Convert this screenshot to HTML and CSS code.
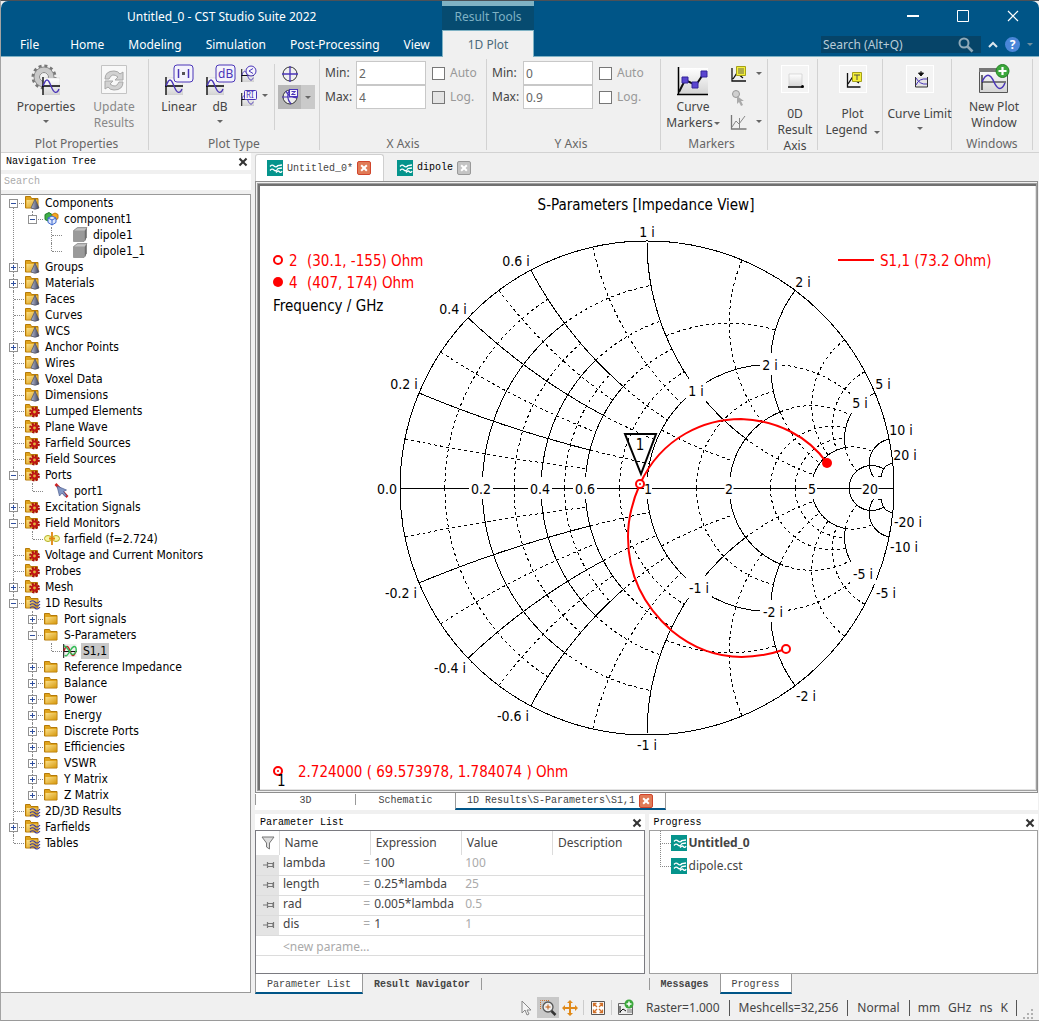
FILE: index.html
```html
<!DOCTYPE html>
<html lang="en">
<head>
  <meta charset="utf-8">
  <meta name="viewport" content="width=device-width">
  <title>Untitled_0 - CST Studio Suite 2022</title>
  <link rel="stylesheet" href="styles.css">
</head>
<body>

<!-- shared icons -->
<svg class="defs" width="0" height="0">
  <defs>
    <linearGradient id="gold" x1="0" y1="0" x2="1" y2="1">
      <stop offset="0" stop-color="#fbe08a"/><stop offset="1" stop-color="#d79a10"/>
    </linearGradient>
    <linearGradient id="paper" x1="0" y1="0" x2="0" y2="1">
      <stop offset="0" stop-color="#fff"/><stop offset="1" stop-color="#d4d4d4"/>
    </linearGradient>
    <linearGradient id="steel" x1="0" y1="0" x2="1" y2="0">
      <stop offset="0" stop-color="#b9bfd6"/><stop offset="1" stop-color="#3c4059"/>
    </linearGradient>
    <symbol id="folder" viewBox="0 0 16 16">
      <path d="M.5 2.500h5l1 2h6.500v8.500h-12.500z" fill="#e0a41c" stroke="#b57a08"/>
      <path d="M1.500 6h11v6.500h-11z" fill="url(#gold)"/>
    </symbol>
    <symbol id="folder-cone" viewBox="0 0 16 16">
      <path d="M.5 1.500h5l1 2h6.500v9.500h-12.500z" fill="#e0a41c" stroke="#b57a08"/>
      <path d="M1.500 5h11v7.500h-11z" fill="url(#gold)"/>
      <path d="M10 4l4 9q-4 2.500-8 0z" fill="url(#steel)" stroke="#4a4d63" stroke-width=".7"/>
    </symbol>
    <symbol id="folder-gear" viewBox="0 0 16 16">
      <path d="M.5 1.500h4l1 2h7v9.500h-12z" fill="#e0a41c" stroke="#b57a08"/>
      <path d="M1.500 5h10.500v7.500h-10.500z" fill="url(#gold)"/>
      <circle cx="9.500" cy="9" r="4.200" fill="none" stroke="#a81010" stroke-width="2.400" stroke-dasharray="2 1.300"/>
      <circle cx="9.500" cy="9" r="2.500" fill="none" stroke="#c01414" stroke-width="2.200"/>
    </symbol>
    <symbol id="folder-wave" viewBox="0 0 16 16">
      <path d="M.5 1.500h4.500l1 2h7v9.500h-12.500z" fill="#e0a41c" stroke="#b57a08"/>
      <path d="M1.500 5h11v7.500h-11z" fill="url(#gold)"/>
      <path d="M5 7q2.500-2.500 5 0t5-1M5 10q2.500-2.500 5 0t5-1M5 13q2.500-2.500 5 0t5-1" fill="none" stroke="#3d3c9c" stroke-width="1.100"/>
    </symbol>
    <symbol id="cubes" viewBox="0 0 16 16">
      <path d="M1 3.500l4-2 3 2v5l-3 2-4-2z" fill="#3fae49" stroke="#1d7a28"/>
      <path d="M8 3.500l3-1.500 3 1.500v4l-3 2-3-2z" fill="#f5a623" stroke="#c47d0e"/>
      <path d="M4 7l4-2 4 2v4.500l-4 2.500-4-2.500z" fill="#dfe8fb" stroke="#3b66d0"/>
      <path d="M4 7l4 2 4-2M8 9v5" fill="none" stroke="#3b66d0"/>
    </symbol>
    <symbol id="solid" viewBox="0 0 16 16">
      <path d="M.5 3.500l4-3h9.500l-1.500 3v9.500l-1.500 1.500h-10.500z" fill="#9a9a9a" stroke="#7b7b7b" stroke-width=".6"/>
      <path d="M1.500 3.300l3-2h9l-2 2.200h-10z" fill="#c4c4c4"/>
      <path d="M11.800 4l2-3v9.500l-2 3z" fill="#6e6e6e"/>
    </symbol>
    <symbol id="port" viewBox="0 0 16 16">
      <path d="M1.500 1l12 13" stroke="#d02020" stroke-width="2.600"/>
      <path d="M3 3l9.500 4-3 1.500 3 4-1.500 1-3-3.500-2.500 3z" fill="#8397c4" stroke="#4d5f90" stroke-width=".7"/>
    </symbol>
    <symbol id="farfield" viewBox="0 0 16 16">
      <ellipse cx="4" cy="7.500" rx="3.500" ry="3" fill="#f7f6a0" stroke="#b3ad22"/>
      <ellipse cx="12" cy="7.500" rx="3.500" ry="3" fill="#f7f6a0" stroke="#b3ad22"/>
      <path d="M8 1v13M5 7.500h6" stroke="#e0850e" stroke-width="1.800"/>
    </symbol>
    <symbol id="curve" viewBox="0 0 16 16">
      <path d="M.5 1h13v13h-13z" fill="#eee"/>
      <path d="M.7 1v14M1 8.500h13" stroke="#111"/>
      <path d="M1 8q3-9 6 0t6 0" fill="none" stroke="#b22" stroke-width="1.400"/>
      <path d="M1 3q2 0 5 5t5 3q3-2 2-6-2-4-6 3t-5 4" fill="none" stroke="#3b5" stroke-width="1.400"/>
    </symbol>
    <symbol id="doc" viewBox="0 0 16 16">
      <path d="M0 0h16v16h-16z" fill="#05948c"/>
      <path d="M3 6.500q2-2.500 4-.5t4-.5l4-.5M3 10.500q2-2.500 4-.5t4-1.500l4-.5M9 12.500q2-2.500 3.500-.8t2.500-.7" fill="none" stroke="#fff" stroke-width="1.300"/>
    </symbol>
    <symbol id="plot" viewBox="0 0 18 18">
      <path d="M1 1h17v17h-17z" fill="url(#paper)" stroke="#c8c8c8" stroke-width=".5"/>
      <path d="M1 0v18M0 9h18" stroke="#000" stroke-width="1.300"/>
      <path d="M1 9c3-8 5-8 8 0s6 8 8 3" fill="none" stroke="#4a35b8" stroke-width="1.300"/>
    </symbol>
    <symbol id="pin" viewBox="0 0 12 8">
      <path d="M0 4h4M4.500 1v6M5 2.500h5v3h-5M10.500 1v6" fill="none" stroke="#777" stroke-width="1.200"/>
    </symbol>
  </defs>
</svg>

<header class="titlebar">
  <div class="title">Untitled_0 - CST Studio Suite 2022</div>
  <nav class="menu">
    <a href="#" class="file">File</a>
    <a href="#">Home</a>
    <a href="#">Modeling</a>
    <a href="#">Simulation</a>
    <a href="#">Post-Processing</a>
    <a href="#">View</a>
  </nav>
  <div class="context">
    <div class="context-title">Result Tools</div>
    <a href="#" class="context-tab">1D Plot</a>
  </div>
  <div class="win-buttons">
    <button aria-label="Minimize"><svg width="12" height="12"><path d="M0 6h12" stroke="#fff" stroke-width="2"/></svg></button>
    <button aria-label="Maximize"><svg width="12" height="12"><path d="M.5.5h11v11h-11z" fill="none" stroke="#fff"/></svg></button>
    <button aria-label="Close"><svg width="12" height="12"><path d="M1 1l10 10M11 1l-10 10" stroke="#fff" stroke-width="1.200"/></svg></button>
  </div>
  <div class="tools">
    <div class="search">
      <input type="text" placeholder="Search (Alt+Q)" aria-label="Search">
      <svg width="16" height="16"><circle cx="6" cy="6" r="4.500" fill="none" stroke="#8fa9b8" stroke-width="2"/><path d="M9.500 9.500l5 5" stroke="#8fa9b8" stroke-width="2.600"/></svg>
    </div>
    <button aria-label="Collapse ribbon"><svg width="10" height="8"><path d="M1 6l4-4 4 4" fill="none" stroke="#dbe7ee" stroke-width="2"/></svg></button>
    <button class="help" aria-label="Help">?</button>
    <i class="caret light"></i>
  </div>
</header>

<section class="ribbon">
  <div class="group g-props">
    <div class="items">
      <button class="big">
        <svg width="32" height="32">
          <circle cx="14" cy="13" r="11" fill="none" stroke="#777" stroke-width="3" stroke-dasharray="3 2.760"/>
          <circle cx="14" cy="13" r="7.500" fill="none" stroke="#c9c9c9" stroke-width="5"/>
          <circle cx="14" cy="13" r="10" fill="none" stroke="#888"/>
          <circle cx="14" cy="13" r="4.500" fill="#f0f0f0" stroke="#888"/>
          <use href="#plot" x="12" y="13" width="18" height="18"/>
        </svg>
        <span>Properties</span><i class="caret"></i>
      </button>
      <button class="big off" disabled>
        <svg width="32" height="32">
          <path d="M3.500 1.500h25v28h-25z" fill="#f8f8f8" stroke="#c4c4c4"/>
          <path d="M7 15q0-8 9-8 4 0 6 3l3-2v8h-8l3-3q-6-5-9 2zM25 18q0 8-9 8-4 0-6-3l-3 2v-8h8l-3 3q6 5 9-2z" fill="#d2d2d2" stroke="#a8a8a8"/>
        </svg>
        <span>Update<br>Results</span>
      </button>
    </div>
    <h2>Plot Properties</h2>
  </div>

  <div class="group g-type">
    <div class="items">
      <button class="big">
        <svg width="32" height="32">
          <use href="#plot" x="2" y="13" width="18" height="18"/>
          <rect x="11" y="1" width="19" height="17" rx="3" fill="#f4f3fb" stroke="#4a35b8"/>
          <path d="M15.500 5v9M25.500 5v9" stroke="#4a35b8" stroke-width="1.500"/><path d="M19 8h3v3h-3z" fill="#555"/>
        </svg>
        <span>Linear</span>
      </button>
      <button class="big narrow">
        <svg width="32" height="32">
          <use href="#plot" x="2" y="13" width="18" height="18"/>
          <rect x="12" y="1" width="19" height="17" rx="3" fill="#f4f3fb" stroke="#4a35b8"/>
          <text x="14" y="14" class="glyph">dB</text>
        </svg>
        <span>dB</span><i class="caret"></i>
      </button>
      <div class="small-col">
        <button aria-label="Phase"><svg width="18" height="18"><use href="#plot" x="1" y="4" width="13" height="13"/><circle cx="11" cy="6" r="5" fill="#f4f3fb" stroke="#4a35b8"/><path d="M13 3.500l-4 2.500 4 2.500" fill="none" stroke="#4a35b8"/></svg></button>
        <button aria-label="Real and imaginary"><svg width="18" height="18"><use href="#plot" x="1" y="4" width="13" height="13"/><rect x="4.500" y="1.500" width="12" height="9" rx="1" fill="#f4f3fb" stroke="#4a35b8"/><text x="6" y="9" class="glyph tiny">RI</text></svg></button>
      </div>
      <i class="caret low"></i>
      <div class="rule"></div>
      <div class="small-col">
        <button aria-label="Polar"><svg width="18" height="18"><circle cx="9" cy="9" r="7" fill="none" stroke="#333"/><path d="M1 9h16M9 1v16" stroke="#4a35b8" stroke-width="1.300"/></svg></button>
        <button class="pressed" aria-label="Smith chart">
          <svg width="18" height="18"><circle cx="9" cy="9" r="7" fill="#eee" stroke="#333"/><path d="M1 9h16M9 1q-5 8 1 15M5 3q2 6 11 7" fill="none" stroke="#4a35b8" stroke-width="1.200"/><rect x="8.500" y="1.500" width="8" height="7" fill="#f4f3fb" stroke="#4a35b8"/><path d="M10.500 3.500h4l-4 3h4" fill="none" stroke="#4a35b8"/></svg>
          <span><i class="caret"></i></span>
        </button>
      </div>
    </div>
    <h2>Plot Type</h2>
  </div>

  <div class="group g-axis">
    <div class="axis">
      <label for="xmin">Min:</label><input id="xmin" type="text" value="2">
      <label class="check"><input type="checkbox">Auto</label>
      <label for="xmax">Max:</label><input id="xmax" type="text" value="4">
      <label class="check"><input type="checkbox" disabled>Log.</label>
    </div>
    <h2>X Axis</h2>
  </div>

  <div class="group g-axis y">
    <div class="axis">
      <label for="ymin">Min:</label><input id="ymin" type="text" value="0">
      <label class="check"><input type="checkbox">Auto</label>
      <label for="ymax">Max:</label><input id="ymax" type="text" value="0.9">
      <label class="check"><input type="checkbox">Log.</label>
    </div>
    <h2>Y Axis</h2>
  </div>

  <div class="group g-markers">
    <div class="items">
      <button class="big">
        <svg width="32" height="32"><path d="M2 4h29v26h-29z" fill="url(#paper)"/><path d="M1.500 3v28M0 30.500h31" stroke="#000" stroke-width="1.500"/><path d="M2 28l6-12 11 5 8-12" fill="none" stroke="#111" stroke-width="2"/><path d="M5 13h6v6h-6zM15 18h6v6h-6zM24 7h6v6h-6z" fill="#5a45d0" stroke="#35269a"/></svg>
        <span>Curve<br>Markers<i class="caret"></i></span>
      </button>
      <div class="small-col three">
        <button aria-label="Marker label"><svg width="18" height="18"><path d="M2 3v13h14M3 14l4-6 6 5" fill="none" stroke="#111" stroke-width="1.300"/><path d="M6.500 1.500h9v9h-9z" fill="#f5f03a" stroke="#a5a01a"/><path d="M8 4h6M8 6h6M8 8h6" stroke="#665"/></svg><i class="caret"></i></button>
        <button aria-label="Pick marker"><svg width="18" height="18"><circle cx="6" cy="5" r="3.500" fill="#d0d0d0" stroke="#999"/><path d="M7 7l7 5-3 0 2 4-2 1-2-4-2 2z" fill="#aaa"/></svg></button>
        <button aria-label="Axis marker"><svg width="18" height="18"><path d="M1.500 2v14h15" fill="none" stroke="#777" stroke-width="1.300"/><path d="M2 14l4-6 3 3 6-8M9.500 5v11" fill="none" stroke="#888"/></svg><i class="caret"></i></button>
      </div>
    </div>
    <h2>Markers</h2>
  </div>

  <div class="group g-single g-0d">
    <button class="boxed">
      <svg width="28" height="28"><path d="M7 8h13v13h-13z" fill="url(#paper)" stroke="#ccc" stroke-width=".7"/><path d="M6 21h14" stroke="#111" stroke-width="1.500"/><circle cx="20.500" cy="20.500" r="1.500"/></svg>
      <span>0D<br>Result<br>Axis</span>
    </button>
  </div>
  <div class="group g-single g-legend">
    <button class="boxed">
      <svg width="28" height="28"><path d="M7.500 7v14h13M8 18l4-6 7 5" fill="none" stroke="#111" stroke-width="1.300"/><path d="M12.500 6.500h9v9h-9z" fill="#f5f03a" stroke="#a5a01a"/><path d="M14 9h6M17 9v5" stroke="#554"/></svg>
      <span>Plot<br>Legend <i class="caret"></i></span>
    </button>
  </div>
  <div class="group g-single g-limit">
    <button class="boxed">
      <svg width="28" height="28"><path d="M14 5v3M11.500 7h5l-2.500 3z" fill="#111" stroke="#111"/><path d="M8.500 11v10h12v-10" fill="#e4e4e4" stroke="#333"/><path d="M9 12q4 7 11 6M9 19q3-7 11-6" fill="none" stroke="#4a35b8"/></svg>
      <span>Curve Limit</span><i class="caret"></i>
    </button>
  </div>
  <div class="group g-windows">
    <div class="items">
      <button class="big">
        <svg width="32" height="32"><path d="M1.500 4.500h28v24h-28z" fill="url(#paper)" stroke="#555"/><path d="M1 4h29v4h-29z" fill="#777"/><path d="M4 11v15M4 18h24" stroke="#111" stroke-width="1.200"/><path d="M4 18c4-9 8-9 12 0s8 8 11 1" fill="none" stroke="#4a35b8" stroke-width="1.500"/><circle cx="24.500" cy="7" r="6.500" fill="#3ca83c" stroke="#238023"/><path d="M20.500 7h8M24.500 3v8" stroke="#fff" stroke-width="2.200"/></svg>
        <span>New Plot<br>Window</span>
      </button>
    </div>
    <h2>Windows</h2>
  </div>
</section>

<main class="workspace">

  <aside class="nav-panel">
    <div class="dock-title">Navigation Tree<button class="x" aria-label="Close panel"></button></div>
    <input class="tree-search" type="text" placeholder="Search" aria-label="Search tree">
    <ul class="tree">
      <li><div class="node"><button class="toggle open"></button><svg><use href="#folder-cone"/></svg><span>Components</span></div>
        <ul>
          <li><div class="node"><button class="toggle open"></button><svg><use href="#cubes"/></svg><span>component1</span></div>
            <ul>
              <li><div class="node deep"><svg><use href="#solid"/></svg><span>dipole1</span></div></li>
              <li><div class="node deep"><svg><use href="#solid"/></svg><span>dipole1_1</span></div></li>
            </ul>
          </li>
        </ul>
      </li>
      <li><div class="node"><button class="toggle"></button><svg><use href="#folder-cone"/></svg><span>Groups</span></div></li>
      <li><div class="node"><button class="toggle"></button><svg><use href="#folder-cone"/></svg><span>Materials</span></div></li>
      <li><div class="node"><svg><use href="#folder-cone"/></svg><span>Faces</span></div></li>
      <li><div class="node"><svg><use href="#folder-cone"/></svg><span>Curves</span></div></li>
      <li><div class="node"><svg><use href="#folder-cone"/></svg><span>WCS</span></div></li>
      <li><div class="node"><button class="toggle"></button><svg><use href="#folder-cone"/></svg><span>Anchor Points</span></div></li>
      <li><div class="node"><svg><use href="#folder-cone"/></svg><span>Wires</span></div></li>
      <li><div class="node"><svg><use href="#folder-cone"/></svg><span>Voxel Data</span></div></li>
      <li><div class="node"><svg><use href="#folder-cone"/></svg><span>Dimensions</span></div></li>
      <li><div class="node"><svg><use href="#folder-gear"/></svg><span>Lumped Elements</span></div></li>
      <li><div class="node"><svg><use href="#folder-gear"/></svg><span>Plane Wave</span></div></li>
      <li><div class="node"><svg><use href="#folder-gear"/></svg><span>Farfield Sources</span></div></li>
      <li><div class="node"><svg><use href="#folder-gear"/></svg><span>Field Sources</span></div></li>
      <li><div class="node"><button class="toggle open"></button><svg><use href="#folder-gear"/></svg><span>Ports</span></div>
        <ul>
          <li><div class="node deep"><svg><use href="#port"/></svg><span>port1</span></div></li>
        </ul>
      </li>
      <li><div class="node"><button class="toggle"></button><svg><use href="#folder-gear"/></svg><span>Excitation Signals</span></div></li>
      <li><div class="node"><button class="toggle open"></button><svg><use href="#folder-gear"/></svg><span>Field Monitors</span></div>
        <ul>
          <li><div class="node"><svg><use href="#farfield"/></svg><span>farfield (f=2.724)</span></div></li>
        </ul>
      </li>
      <li><div class="node"><svg><use href="#folder-gear"/></svg><span>Voltage and Current Monitors</span></div></li>
      <li><div class="node"><svg><use href="#folder-gear"/></svg><span>Probes</span></div></li>
      <li><div class="node"><button class="toggle"></button><svg><use href="#folder-gear"/></svg><span>Mesh</span></div></li>
      <li><div class="node"><button class="toggle open"></button><svg><use href="#folder-wave"/></svg><span>1D Results</span></div>
        <ul>
          <li><div class="node"><button class="toggle"></button><svg><use href="#folder"/></svg><span>Port signals</span></div></li>
          <li><div class="node"><button class="toggle open"></button><svg><use href="#folder"/></svg><span>S-Parameters</span></div>
            <ul>
              <li><div class="node"><svg><use href="#curve"/></svg><span class="selected">S1,1</span></div></li>
            </ul>
          </li>
          <li><div class="node"><button class="toggle"></button><svg><use href="#folder"/></svg><span>Reference Impedance</span></div></li>
          <li><div class="node"><button class="toggle"></button><svg><use href="#folder"/></svg><span>Balance</span></div></li>
          <li><div class="node"><button class="toggle"></button><svg><use href="#folder"/></svg><span>Power</span></div></li>
          <li><div class="node"><button class="toggle"></button><svg><use href="#folder"/></svg><span>Energy</span></div></li>
          <li><div class="node"><button class="toggle"></button><svg><use href="#folder"/></svg><span>Discrete Ports</span></div></li>
          <li><div class="node"><button class="toggle"></button><svg><use href="#folder"/></svg><span>Efficiencies</span></div></li>
          <li><div class="node"><button class="toggle"></button><svg><use href="#folder"/></svg><span>VSWR</span></div></li>
          <li><div class="node"><button class="toggle"></button><svg><use href="#folder"/></svg><span>Y Matrix</span></div></li>
          <li><div class="node"><button class="toggle"></button><svg><use href="#folder"/></svg><span>Z Matrix</span></div></li>
        </ul>
      </li>
      <li><div class="node"><svg><use href="#folder-wave"/></svg><span>2D/3D Results</span></div></li>
      <li><div class="node"><button class="toggle"></button><svg><use href="#folder-wave"/></svg><span>Farfields</span></div></li>
      <li><div class="node"><svg><use href="#folder-wave"/></svg><span>Tables</span></div></li>
    </ul>
  </aside>

  <div class="content">
    <div class="doc-tabs">
      <div class="doc-tab active"><svg width="16" height="16"><use href="#doc"/></svg><a href="#">Untitled_0*</a><button class="tab-x red" aria-label="Close tab"></button></div>
      <div class="doc-tab"><svg width="16" height="16"><use href="#doc"/></svg><a href="#">dipole</a><button class="tab-x" aria-label="Close tab"></button></div>
    </div>

    <div class="plot-frame">
      <div class="plot-inner">
        <svg id="smith" viewBox="260 186 775 603">
          <g id="grid"></g>
          <g id="labels"></g>
          <text x="646" y="210" class="mid">S-Parameters [Impedance View]</text>
          <g class="red">
            <circle cx="278" cy="260" r="4" class="ring"/>
            <text x="289" y="266">2</text><text x="307" y="266">(30.1, -155) Ohm</text>
            <circle cx="278" cy="282" r="5"/>
            <text x="289" y="288">4</text><text x="307" y="288">(407, 174) Ohm</text>
            <path d="M838 260h36" class="trace"/>
            <text x="880" y="266">S1,1 (73.2 Ohm)</text>
          </g>
          <text x="273" y="311">Frequency / GHz</text>

          <path d="M786 649C745 663 706 659 672 631C640 603 628 570 628 537C628 520 632 502 640 484C662 436 706 419 741 419C776 420 808 436 827 463" class="trace"/>
          <circle cx="786" cy="649" r="4" class="ring white"/>
          <circle cx="827" cy="463" r="5" class="dot"/>
          <path d="M625 434h31l-15 40z" class="flag"/>
          <text x="640" y="450" class="mid">1</text>
          <circle cx="640" cy="484" r="4" class="ring white"/><circle cx="640" cy="484" r="1" class="dot"/>

          <circle cx="278" cy="771" r="4" class="ring"/><circle cx="278" cy="771" r="1" class="dot"/>
          <text x="277" y="786">1</text>
          <g class="red"><text x="298" y="777">2.724000 ( 69.573978, 1.784074 ) Ohm</text></g>
        </svg>
      </div>
    </div>

    <div class="view-tabs">
      <a href="#">3D</a>
      <a href="#">Schematic</a>
      <div class="current"><a href="#">1D Results\S-Parameters\S1,1</a><button class="tab-x red" aria-label="Close view"></button></div>
    </div>

    <div class="docks">
      <section class="dock params">
        <div class="dock-title">Parameter List<button class="x" aria-label="Close panel"></button></div>
        <div class="dock-body dark">
          <table>
            <thead>
              <tr>
                <th class="pin"><svg width="14" height="14"><path d="M1 1h12l-4.500 6v6l-3-2v-4z" fill="#ddd" stroke="#777"/></svg></th>
                <th>Name</th><th>Expression</th><th>Value</th><th>Description</th>
              </tr>
            </thead>
            <tbody>
              <tr><td class="pin"><svg width="12" height="8"><use href="#pin"/></svg></td><td>lambda<i>=</i></td><td>100</td><td class="val">100</td><td></td></tr>
              <tr><td class="pin"><svg width="12" height="8"><use href="#pin"/></svg></td><td>length<i>=</i></td><td>0.25*lambda</td><td class="val">25</td><td></td></tr>
              <tr><td class="pin"><svg width="12" height="8"><use href="#pin"/></svg></td><td>rad<i>=</i></td><td>0.005*lambda</td><td class="val">0.5</td><td></td></tr>
              <tr><td class="pin"><svg width="12" height="8"><use href="#pin"/></svg></td><td>dis<i>=</i></td><td>1</td><td class="val">1</td><td></td></tr>
              <tr class="new"><td></td><td>&lt;new parame...</td><td></td><td></td><td></td></tr>
            </tbody>
          </table>
        </div>
        <div class="dock-tabs"><a href="#" class="current">Parameter List</a><a href="#" class="other">Result Navigator</a></div>
      </section>

      <section class="dock progress">
        <div class="dock-title">Progress<button class="x" aria-label="Close panel"></button></div>
        <div class="dock-body">
          <ul class="jobs">
            <li><svg width="16" height="16"><use href="#doc"/></svg><b>Untitled_0</b></li>
            <li><svg width="16" height="16"><use href="#doc"/></svg>dipole.cst</li>
          </ul>
        </div>
        <div class="dock-tabs"><a href="#" class="other first">Messages</a><a href="#" class="current">Progress</a></div>
      </section>
    </div>
  </div>
</main>

<footer class="status">
  <button aria-label="Select"><svg width="18" height="18"><path d="M5 2v12l3-3 2 5 2-1-2-4h4z" fill="#f4f4f4" stroke="#888"/></svg></button>
  <button class="on" aria-label="Zoom"><svg width="18" height="18"><path d="M1.500 10v-8.500h9" fill="none" stroke="#d0702a" stroke-dasharray="1 1"/><circle cx="9" cy="8" r="5" fill="#eee" stroke="#555" stroke-width="1.300"/><path d="M12.500 12l4 4" stroke="#333" stroke-width="2.500"/><path d="M6.500 8h5M9 5.500v5" stroke="#c05a10"/></svg></button>
  <button aria-label="Pan"><svg width="18" height="18"><path d="M9 3v12M3 9h12" stroke="#e08a1a" stroke-width="2"/><path d="M9 1l3 3h-6zM9 17l3-3h-6zM1 9l3-3v6zM17 9l-3-3v6z" fill="#e08a1a"/></svg></button>
  <i class="sep"></i>
  <button aria-label="Fit view"><svg width="18" height="18"><path d="M2.500 2.500h13v13h-13z" fill="#fff" stroke="#555"/><path d="M4.500 7.500v-3h3M10.500 4.500h3v3M13.500 10.500v3h-3M7.500 13.500h-3v-3M5 5l3 3M13 5l-3 3M13 13l-3-3M5 13l3-3" fill="none" stroke="#d0702a" stroke-width="1.300"/></svg></button>
  <i class="sep"></i>
  <button aria-label="Add result"><svg width="18" height="18"><path d="M1.500 4.500h14v11h-14z" fill="#eee" stroke="#666"/><path d="M3 7v7M3 13l3-3 3 2" fill="none" stroke="#111"/><path d="M10 11h5M10 13h5" stroke="#777"/><circle cx="12" cy="5" r="4.500" fill="#3ca83c"/><path d="M9.500 5h5M12 2.500v5" stroke="#fff" stroke-width="1.500"/></svg></button>
  <span>Raster=1.000</span>
  <span>Meshcells=32,256</span>
  <span>Normal</span>
  <span class="units"><em>mm</em><em>GHz</em><em>ns</em><em>K</em></span>
  <svg class="grip" width="12" height="12"><path d="M8 2h2M8 6h2M4 6h2M8 10h2M4 10h2M0 10h2" stroke="#b0b0b0" stroke-width="2"/></svg>
</footer>

<script src="script.js"></script>
</body>
</html>
```
FILE: styles.css
```css
* {
  box-sizing: border-box;
}

body {
  margin: 0;
  height: 100vh;
  display: flex;
  flex-direction: column;
  background: #f0f0f0;
  border-top: 1px solid #4d5157;
  border-left: 1px solid #a3a3a3;
  border-bottom: 1px solid #9a9a9a;
  font-family: "Noto Sans", "Open Sans", sans-serif;
  font-size: 12px;
  line-height: 16px;
  color: #444;
  overflow: hidden;
}

button {
  font: inherit;
  color: inherit;
  background: none;
  border: 0;
  padding: 0;
}

a {
  color: inherit;
  text-decoration: none;
}

input {
  font: inherit;
  color: #666;
  min-width: 0;
}

svg {
  display: block;
  flex: none;
}

.defs {
  position: absolute;
}

.caret {
  display: inline-block;
  border: 3px solid transparent;
  border-top-color: #666;
  border-bottom: 0;
}

.caret.light {
  border-top-color: #6f8f9f;
}

/* title bar */

.titlebar {
  display: grid;
  grid-template-columns: 441px 92px 1fr;
  grid-template-rows: 29px 26px;
  background: #005587;
  border-bottom: 1px solid #7fb2c4;
  border-radius: 7px 7px 0 0;
  color: #fff;
}

.title {
  padding-left: 126px;
  line-height: 31px;
}

.menu {
  grid-row: 2;
  display: flex;
  padding-left: 7px;
  line-height: 29px;
}

.menu a {
  padding: 0 12px;
}

.menu .file {
  margin-right: 7px;
}

.context {
  grid-column: 2;
  grid-row: 1 / 3;
  margin-bottom: -1px;
  text-align: center;
}

.context-title {
  height: 29px;
  line-height: 21px;
  background: #064b70;
  border-top: 5px solid #7fb2c4;
  color: #7fb2c4;
}

.context-tab {
  display: block;
  height: 27px;
  line-height: 27px;
  background: #f0f0f0;
  border: 1px solid #7fb2c4;
  border-bottom: 0;
  color: #4a6a7a;
}

.win-buttons {
  grid-column: 3;
  grid-row: 1;
  display: flex;
  justify-content: flex-end;
  align-items: center;
  gap: 38px;
  padding-right: 20px;
}

.tools {
  grid-column: 3;
  grid-row: 2;
  display: flex;
  justify-content: flex-end;
  align-items: center;
  gap: 7px;
  padding: 3px 6px 0 0;
}

.search {
  display: flex;
  align-items: center;
  width: 160px;
  height: 17px;
  background: #064468;
  padding-right: 7px;
}

.search input {
  flex: 1;
  background: none;
  border: 0;
  padding: 0 2px;
  color: #b8ccd8;
}

.search input::placeholder {
  color: #b8ccd8;
}

.help {
  width: 15px;
  height: 15px;
  border-radius: 50%;
  background: #4a86d8;
  line-height: 15px;
  font-weight: bold;
}

/* ribbon */

.ribbon {
  display: flex;
  height: 96px;
  padding: 2px 0;
  border-bottom: 1px solid #d2d2d2;
}

.group {
  display: flex;
  flex-direction: column;
  flex: none;
  border-right: 1px solid #d2d2d2;
}

.group h2 {
  margin: auto 0 -2px;
  font-size: 12px;
  font-weight: normal;
  color: #666;
  text-align: center;
}

.g-props { width: 148px; }
.g-type { width: 171px; }
.g-axis { width: 167px; }
.g-axis.y { width: 174px; }
.g-markers { width: 107px; }
.g-0d { width: 50px; }
.g-legend { width: 65px; }
.g-limit { width: 69px; }
.g-windows { width: 81px; }

.g-props h2 {
  padding-left: 4px;
}

.g-axis.y h2,
.g-markers h2 {
  padding-right: 5px;
}

.items {
  display: flex;
  justify-content: center;
  padding-top: 5px;
}

.g-props .items {
  justify-content: flex-start;
  padding-left: 11px;
}

.g-type .items {
  justify-content: flex-start;
  padding-left: 7px;
}

.g-windows .items {
  padding-left: 4px;
}

.big {
  display: flex;
  flex-direction: column;
  align-items: center;
  width: 62px;
}

.big span {
  padding-top: 3px;
  white-space: nowrap;
}

.big > .caret {
  margin-top: 5px;
}

.g-props .big {
  width: 68px;
}

.g-type .big {
  width: 46px;
}

.g-type .narrow {
  width: 36px;
}

.off {
  color: #888;
}

.glyph {
  font: 12px "Noto Sans", sans-serif;
  fill: #4a35b8;
}

.glyph.tiny {
  font-size: 8px;
}

.small-col {
  display: flex;
  flex-direction: column;
  gap: 5px;
}

.narrow + .small-col {
  padding-left: 2px;
}

.small-col button {
  display: flex;
  align-items: center;
  height: 19px;
}

.caret.low {
  margin: 30px 4px 0;
}

.rule {
  width: 1px;
  height: 66px;
  margin: 0 3px 0 2px;
  background: #d2d2d2;
}

.small-col .pressed {
  height: 24px;
  margin-top: -3px;
  padding-left: 3px;
  background: #b8b8b8;
}

.rule + .small-col button:first-child {
  padding-left: 3px;
}

.pressed span {
  display: flex;
  align-items: center;
  justify-content: center;
  align-self: stretch;
  width: 14px;
  margin-left: 2px;
  background: #cacaca;
}

.axis {
  display: grid;
  grid-template-columns: 31px 70px 1fr;
  padding: 2px 0 0 5px;
}

.axis label {
  line-height: 24px;
}

.axis > input {
  height: 24px;
  border: 1px solid #c8c8c8;
  padding: 0 2px;
  background: #fff;
}

.axis .check {
  display: flex;
  align-items: center;
  gap: 5px;
  padding-left: 6px;
  color: #999;
}

.check input {
  appearance: none;
  width: 13px;
  height: 13px;
  margin: 0;
  border: 1px solid #777;
  background: #fff;
}

.check input:disabled {
  background: #e4e4e4;
}

.g-markers .items {
  gap: 6px;
  padding-right: 4px;
}

.three button {
  gap: 7px;
}

.g-markers .caret {
  margin-left: 1px;
  vertical-align: middle;
}

.boxed {
  display: flex;
  flex-direction: column;
  align-items: center;
  padding: 6px 0 0 5px;
  white-space: nowrap;
}

.boxed svg {
  background: #f4f4f4;
  border: 1px solid #fff;
  margin-bottom: 13px;
}

.boxed > .caret {
  margin-top: 5px;
}

.boxed span .caret {
  margin-left: 3px;
}

/* workspace */

.workspace {
  flex: 1;
  display: flex;
  min-height: 0;
}

.nav-panel {
  width: 250px;
  display: flex;
  flex-direction: column;
  gap: 4px;
  padding-bottom: 2px;
}

.dock-title {
  display: flex;
  justify-content: space-between;
  align-items: center;
  height: 17px;
  padding: 0 4px 0 5px;
  background: #fff;
  color: #000;
  font: 10px/17px "Liberation Mono", monospace;
}

.x {
  position: relative;
  width: 9px;
  height: 9px;
}

.x::before,
.x::after {
  content: "";
  position: absolute;
  left: 0;
  top: 4px;
  width: 10px;
  height: 2px;
  background: #333;
  transform: rotate(45deg);
}

.x::after {
  transform: rotate(-45deg);
}

.tree-search {
  height: 16px;
  border: 0;
  padding: 0 3px;
  background: #fff;
  font: 10px/16px "Liberation Mono", monospace;
}

.tree-search::placeholder {
  color: #aaa;
}

.tree {
  flex: 1;
  min-height: 0;
  margin: 0;
  padding: 0 0 0 8px;
  background: #fff;
  border: 1px solid #999;
  border-left: 0;
  font: 12px/16px "DejaVu Sans Condensed", "DejaVu Sans", sans-serif;
  color: #000;
}

.tree ul {
  margin: 0;
  padding-left: 19px;
}

.tree li {
  position: relative;
  list-style: none;
}

/* dotted guide lines */
.tree li::before {
  content: "";
  position: absolute;
  left: 4px;
  top: 0;
  bottom: 0;
  border-left: 1px dotted #888;
}

.tree > li:first-child::before {
  top: 8px;
}

.tree li:last-child::before {
  bottom: auto;
  height: 8px;
}

.node {
  position: relative;
  display: flex;
  align-items: center;
  height: 16px;
  padding-left: 16px;
}

.node::before {
  content: "";
  position: absolute;
  left: 5px;
  top: 8px;
  width: 10px;
  border-top: 1px dotted #888;
}

.node.deep {
  padding-left: 26px;
}

.node svg {
  width: 16px;
  height: 16px;
  margin-right: 4px;
}

.toggle {
  position: absolute;
  left: 0;
  top: 4px;
  width: 9px;
  height: 9px;
  border: 1px solid #919191;
  background: #fff;
}

.toggle::before,
.toggle::after {
  content: "";
  position: absolute;
  left: 1px;
  top: 3px;
  width: 5px;
  height: 1px;
  background: #2f4f9f;
}

.toggle::after {
  left: 3px;
  top: 1px;
  width: 1px;
  height: 5px;
}

.toggle.open::after {
  display: none;
}

.selected {
  background: #c8c8c8;
  margin-left: -2px;
  padding: 0 2px;
}

.content {
  flex: 1;
  display: flex;
  flex-direction: column;
  min-width: 0;
  padding: 1px 1px 1px 4px;
}

.doc-tabs {
  display: flex;
  height: 27px;
  font: 10px/27px "Liberation Mono", monospace;
}

.doc-tab {
  display: flex;
  align-items: center;
  gap: 4px;
  padding: 0 13px;
  color: #000;
}

.doc-tab.active {
  background: #fff;
  border: 1px solid #cfcfcf;
  border-bottom: 0;
  border-radius: 3px 3px 0 0;
  padding: 0 12px 0 11px;
  color: #444;
}

.tab-x {
  position: relative;
  width: 14px;
  height: 14px;
  border: 1px solid #999;
  border-radius: 2px;
  background: #c4c4c4;
}

.tab-x.red {
  background: #e07a56;
  border-color: #d0452c;
}

.tab-x::before,
.tab-x::after {
  content: "";
  position: absolute;
  left: 2px;
  top: 5px;
  width: 8px;
  height: 2px;
  background: #fff;
  transform: rotate(45deg);
}

.tab-x::after {
  transform: rotate(-45deg);
}

.plot-frame {
  flex: 1;
  min-height: 0;
  border: 1px solid #8e8e8e;
  padding: 1px 0 1px 1px;
}

.plot-inner {
  height: 100%;
  border: 1px solid #a0a0a0;
  background: #fff;
  box-shadow: inset 2px 2px #707070, inset -1px -1px #e3e3e3;
  padding: 2px 1px 1px 2px;
}

#smith {
  width: 100%;
  height: 100%;
  font: 15px "DejaVu Sans Condensed", "DejaVu Sans", sans-serif;
  fill: #000;
}

#grid path {
  fill: none;
  stroke: #000;
  shape-rendering: crispEdges;
}

#grid .dashed {
  stroke-dasharray: 3 3;
}

#labels {
  font-size: 14px;
}

#labels rect {
  fill: #fff;
}

#smith .mid {
  text-anchor: middle;
}

#smith .red {
  fill: #f00;
}

#smith .ring {
  fill: none;
  stroke: #f00;
  stroke-width: 2;
}

#smith .ring.white {
  fill: #fff;
}

#smith .dot {
  fill: #f00;
}

#smith .trace {
  fill: none;
  stroke: #f00;
  stroke-width: 2;
}

#smith .flag {
  fill: none;
  stroke: #000;
  stroke-width: 2;
}

.view-tabs {
  display: flex;
  height: 17px;
  background: #fff;
  font: 10px/16px "Liberation Mono", monospace;
}

.view-tabs > a {
  width: 100px;
  text-align: center;
  line-height: 14px;
  height: 11px;
  margin-top: 1px;
  border-left: 1px solid #999;
}

.view-tabs .current {
  display: flex;
  align-items: center;
  gap: 4px;
  padding: 0 12px 0 11px;
  border-left: 1px solid #999;
  border-right: 1px solid #999;
  border-bottom: 2px solid #005587;
}

.docks {
  display: flex;
  gap: 4px;
  height: 180px;
  margin-top: 4px;
}

.dock {
  display: flex;
  flex-direction: column;
  flex: 1;
  min-width: 0;
}

.dock .dock-title {
  height: 16px;
}

.dock-body {
  flex: 1;
  background: #fff;
  border: 1px solid #a0a0a0;
}

.dock-body.dark {
  border-color: #7a7a80;
}

.dock-tabs {
  display: flex;
  height: 20px;
  font: 10px/22px "Liberation Mono", monospace;
}

.dock-tabs .current {
  padding: 0 11px;
  background: #fff;
  border-right: 1px solid #999;
  border-left: 1px solid #999;
  border-bottom: 2px solid #005587;
}

.dock-tabs .other {
  height: 12px;
  margin-top: 4px;
  padding: 0 11px;
  line-height: 14px;
  font-weight: bold;
  border-right: 1px solid #999;
}

.dock-tabs .first {
  border-right: 0;
  border-left: 1px solid #999;
}

table {
  width: 100%;
  border-collapse: collapse;
  table-layout: fixed;
}

th {
  height: 24px;
  padding: 0 5px;
  font-weight: normal;
  text-align: left;
  border-left: 1px solid #dcdcdc;
}

td {
  height: 20px;
  padding: 0 4px;
  line-height: 16px;
  vertical-align: top;
  border-bottom: 1px solid #dcdcdc;
  white-space: nowrap;
}

td i {
  float: right;
  font-style: normal;
  color: #aaa;
  margin-right: -4px;
}

.pin {
  width: 23px;
  border-left: 0;
  vertical-align: middle;
}

td.pin {
  background: #e4e4e4;
  padding-left: 7px;
}

.val,
.new td {
  color: #aaa;
}

.new td {
  vertical-align: bottom;
}

.jobs {
  margin: 0;
  padding: 0 0 0 10px;
}

.jobs li {
  position: relative;
  display: flex;
  align-items: center;
  gap: 2px;
  height: 23px;
  padding-left: 11px;
  list-style: none;
}

.jobs li::before {
  content: "";
  position: absolute;
  left: 0;
  top: 0;
  width: 10px;
  height: 12px;
  border-left: 1px dotted #888;
  border-bottom: 1px dotted #888;
}

.jobs li + li::before {
  top: -11px;
  height: 23px;
}

/* status bar */

.status {
  display: flex;
  align-items: center;
  justify-content: flex-end;
  height: 25px;
  padding-right: 4px;
}

.status button {
  display: flex;
  align-items: center;
  justify-content: center;
  width: 22px;
  height: 21px;
}

.status .on {
  background: #c8c8c8;
}

.sep {
  width: 1px;
  height: 15px;
  margin: 0 3px 0 2px;
  background: #ccc;
}

.status span {
  padding: 0 9px;
  border-right: 1px solid #555;
  line-height: 16px;
}

.status .units {
  display: flex;
  gap: 8px;
  padding: 0 8px;
}

.units em {
  font-style: normal;
}

.grip {
  align-self: flex-end;
  margin-left: 6px;
}
```
FILE: script.js
```js
// Smith chart grid, every line is a mapped piece of constant r or constant x
const CX = 647, CY = 488, R = 247;
const grid = document.getElementById('grid');
const labels = document.getElementById('labels');
const NS = 'http://www.w3.org/2000/svg';

function gamma(r, x) {
  const d = (r + 1) * (r + 1) + x * x;
  return [CX + R * (r * r - 1 + x * x) / d, CY - R * 2 * x / d];
}

function add(parent, tag, attrs, text) {
  const el = document.createElementNS(NS, tag);
  for (const key in attrs) el.setAttribute(key, attrs[key]);
  if (text) el.textContent = text;
  parent.appendChild(el);
}

function line(fn, from, to, dashed) {
  for (const sign of [1, -1]) {
    const pts = [];
    for (let i = 0; i <= 60; i++) {
      const [x, y] = fn(from + (to - from) * i / 60, sign);
      pts.push(x.toFixed(1) + ' ' + y.toFixed(1));
    }
    add(grid, 'path', { d: 'M' + pts.join('L'), class: dashed ? 'dashed' : 'solid' });
  }
}

const rLine = (r, a, b, dashed) => line((t, s) => gamma(r, s * t), a, b, dashed);
const xLine = (x, a, b, dashed) => line((t, s) => gamma(t, s * x), a, b, dashed);

add(grid, 'path', { d: `M${CX - R} ${CY}a${R} ${R} 0 1 1 ${2 * R} 0a${R} ${R} 0 1 1 ${-2 * R} 0h${2 * R}` });

// [value, from, to]
[[.2, 0, .6], [.4, 0, .6], [.6, 0, .6], [1, 0, 2], [2, 0, 2], [5, 0, 5], [10, 0, 20], [20, 10, 20]]
  .forEach(([r, a, b]) => rLine(r, a, b, false));
[[.1, 0, .6], [.3, 0, .6], [.5, 0, .6], [.5, 1, 2], [.8, 0, 1], [.2, .6, 1], [.4, .6, 1], [.6, .6, 1],
 [1.5, 0, 2], [3, 0, 5], [4, 0, 5], [1, 2, 5], [2, 2, 5], [5, 5, 10]]
  .forEach(([r, a, b]) => rLine(r, a, b, true));
[[.2, 0, .6], [.4, 0, .6], [.6, 0, .6], [1, 0, 2], [2, 0, 2], [5, 0, 5], [10, 0, 20], [20, 0, 20]]
  .forEach(([x, a, b]) => xLine(x, a, b, false));
[[.1, 0, .6], [.3, 0, .6], [.5, 0, .6], [.5, 1, 2], [.8, 0, 1], [.2, .6, 1], [.4, .6, 1], [.6, .6, 1],
 [1.5, 0, 2], [3, 0, 5], [4, 0, 5], [1, 2, 5], [2, 2, 5], [5, 5, 10]]
  .forEach(([x, a, b]) => xLine(x, a, b, true));

// labels on the lines hide what runs below them
[['0.2', 481, 488, 24], ['0.4', 540, 488, 24], ['0.6', 585, 488, 24], ['1', 648, 488, 8], ['2', 729, 488, 9],
 ['5', 812, 488, 10], ['20', 870, 488, 17], ['1 i', 696, 390, 20], ['-1 i', 699, 587, 26],
 ['2 i', 770, 364, 20], ['-2 i', 773, 611, 26], ['5 i', 860, 402, 20], ['-5 i', 863, 573, 26]]
  .forEach(([text, x, y, w]) => {
    add(labels, 'rect', { x: x - w / 2, y: y - 11, width: w, height: 22 });
    add(labels, 'text', { x: x, y: y + 6, class: 'mid' }, text);
  });

// labels round the rim
[['1 i', 647, 237], ['-1 i', 647, 750], ['0.6 i', 516, 266], ['-0.6 i', 513, 721], ['0.4 i', 453, 314],
 ['-0.4 i', 450, 673], ['0.2 i', 404, 389], ['-0.2 i', 401, 598], ['0.0', 387, 494], ['2 i', 803, 287],
 ['-2 i', 806, 701], ['5 i', 883, 389], ['-5 i', 886, 598], ['10 i', 901, 435], ['20 i', 905, 460],
 ['-20 i', 908, 527], ['-10 i', 904, 552]]
  .forEach(([text, x, y]) => add(labels, 'text', { x: x, y: y, class: 'mid' }, text));
```
